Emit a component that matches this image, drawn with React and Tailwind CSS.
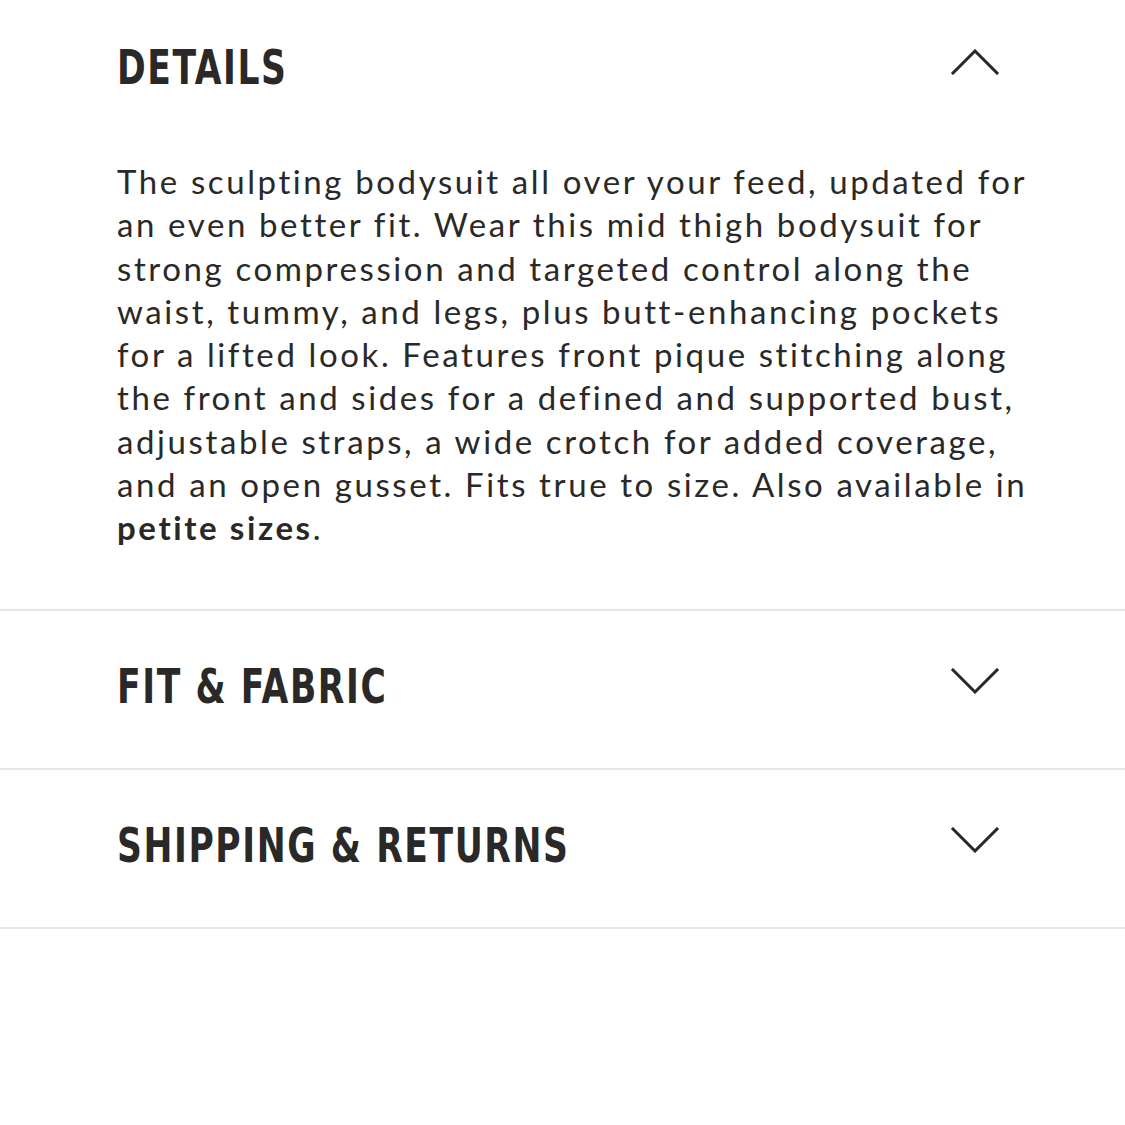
import { useState } from 'react';

function Chevron({ up }) {
  return (
    <svg width="50" height="26" viewBox="0 0 50 26" fill="none" className="shrink-0 mb-[10px]">
      <path
        d={up ? 'M3 24 L25 2 L47 24' : 'M3 2 L25 24 L47 2'}
        stroke="#2a2927"
        strokeWidth="3"
        strokeLinecap="square"
      />
    </svg>
  );
}

const heading = "inline-block origin-left scale-x-[0.8] font-['DejaVu_Sans_Condensed','DejaVu_Sans',sans-serif] font-bold text-[48px] tracking-[2px] text-[#2a2927] leading-none whitespace-nowrap";

const lines = [
  'The sculpting bodysuit all over your feed, updated for',
  'an even better fit. Wear this mid thigh bodysuit for',
  'strong compression and targeted control along the',
  'waist, tummy, and legs, plus butt-enhancing pockets',
  'for a lifted look. Features front pique stitching along',
  'the front and sides for a defined and supported bust,',
  'adjustable straps, a wide crotch for added coverage,',
  'and an open gusset. Fits true to size. Also available in',
];

export default function App() {
  const [open, setOpen] = useState('details');

  const sections = [
    { id: 'details', title: 'DETAILS' },
    { id: 'fit', title: 'FIT & FABRIC' },
    { id: 'shipping', title: 'SHIPPING & RETURNS' },
  ];

  return (
    <div className="w-[1125px] h-[1125px] bg-white">
      {sections.map(s => (
        <div key={s.id} className="border-b-2 border-[#e8e6e3]">
          <button
            onClick={() => setOpen(open === s.id ? null : s.id)}
            className={`w-full flex items-center justify-between pl-[117px] pr-[125px] ${s.id === 'details' ? 'h-[134px]' : 'h-[157px] pb-[6px]'}`}
          >
            <span className={heading}>{s.title}</span>
            <Chevron up={open === s.id} />
          </button>

          {open === s.id && s.id === 'details' && (
            <div className="pl-[117px] pt-[26px] pb-[59px] font-['Lato',sans-serif] text-[33px] leading-[43.3px] tracking-[2.6px] text-[#2a2927]">
              {lines.map(l => (
                <div key={l} className="whitespace-nowrap">{l}</div>
              ))}
              <div>
                <span className="font-bold">petite sizes</span>.
              </div>
            </div>
          )}
        </div>
      ))}
    </div>
  );
}
